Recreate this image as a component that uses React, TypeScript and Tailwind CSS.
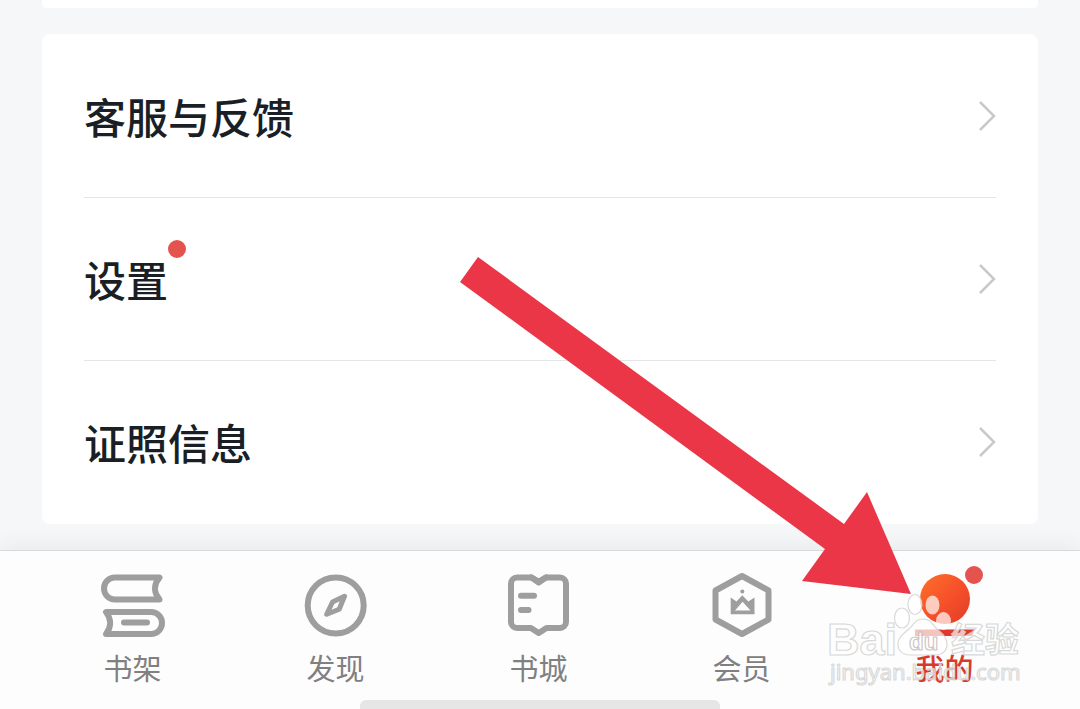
import type { FC, ReactNode } from "react";

interface SettingRowProps {
  label: string;
  hasBadge?: boolean;
}

interface TabItemProps {
  label: string;
  icon: ReactNode;
  active?: boolean;
}

const ShelfIcon: FC = () => (
  <svg viewBox="0 0 72 72" className="size-[72px]" fill="none" stroke="currentColor" strokeWidth="6" strokeLinejoin="round" strokeLinecap="round" aria-hidden="true">
    <path d="M62.500 7.500H18a11 11 0 0 0 0 22h44.500c-6-7-6-15 0-22z" />
    <path d="M9 42h45a11 11 0 0 1 0 22H9c5.500-7 5.500-15 0-22z" />
    <path d="M27 52.500h23" />
  </svg>
);

const CompassIcon: FC = () => (
  <svg viewBox="0 0 72 72" className="size-[72px]" fill="none" stroke="currentColor" strokeLinejoin="round" aria-hidden="true">
    <circle cx="35.700" cy="35.500" r="28" strokeWidth="6" />
    <path d="M44.500 26.200 32.500 32 26.700 44.200 39.200 39.200z" strokeWidth="5" />
  </svg>
);

const StoreIcon: FC = () => (
  <svg viewBox="0 0 72 72" className="size-[72px]" fill="none" stroke="currentColor" strokeWidth="6" strokeLinejoin="round" strokeLinecap="round" aria-hidden="true">
    <path d="M14 7.500h14.500l7.200 4 7.200-4H57a6 6 0 0 1 6 6V52a6 6 0 0 1-6 6H43.500l-7.800 5-7.800-5H14a6 6 0 0 1-6-6V13.500a6 6 0 0 1 6-6z" />
    <path d="M28.500 7.500l7.200 5 7.200-5M18 25.700h13M18 40h7.500" />
  </svg>
);

const VipIcon: FC = () => (
  <svg viewBox="0 0 72 72" className="size-[72px]" fill="none" stroke="currentColor" strokeLinejoin="round" aria-hidden="true">
    <path d="M36 6l26.500 14.500v29L36 64 9.500 49.500v-29z" strokeWidth="6" />
    <path
      d="M24.700 27.500l5.800 4 5.800-6.300 6 6.300 6.200-4v16.700H24.700zM29 40.600h15.500L36.600 31.800z"
      fill="currentColor"
      fillRule="evenodd"
      stroke="none"
    />
    <circle cx="36.300" cy="21.500" r="2" fill="currentColor" stroke="none" />
  </svg>
);

const MineIcon: FC = () => (
  <svg viewBox="0 0 72 72" className="size-[72px]" aria-hidden="true">
    <defs>
      <linearGradient id="mine" x1="0" y1="0" x2="1" y2="1">
        <stop offset="0" stopColor="#ff7028" />
        <stop offset="0.500" stopColor="#f6522a" />
        <stop offset="1" stopColor="#e23b28" />
      </linearGradient>
    </defs>
    <circle cx="36" cy="29" r="25" fill="url(#mine)" />
    <path d="M6 59.500h60l-3 6.500H6z" fill="#e0392b" />
  </svg>
);

const SettingRow: FC<SettingRowProps> = ({ label, hasBadge }) => (
  <li className="border-b border-[#e4e5e7] last:border-b-0">
    <a href="#" className="flex h-[162px] items-center justify-between">
      <span className="relative text-[42px] leading-[60px] font-medium text-[#1a1f26]">
        {label}
        {hasBadge && (
          <span className="absolute -top-[9px] left-full size-[18px] rounded-full bg-[#e5534f]" />
        )}
      </span>
      <svg viewBox="0 0 20 32" className="h-8 w-5" fill="none" stroke="#c9c9c9" strokeWidth="2.500" aria-hidden="true">
        <path d="M4 2l14 14L4 30" />
      </svg>
    </a>
  </li>
);

const TabItem: FC<TabItemProps> = ({ label, icon, active }) => (
  <button
    type="button"
    className={`relative flex flex-1 flex-col items-center gap-[7px] ${active ? "text-[#d9392c]" : "text-[#9e9e9e]"}`}
  >
    {icon}
    <span
      className={`text-[29px] leading-9 ${active ? "font-medium" : "font-normal text-[#808080]"}`}
    >
      {label}
    </span>
    {active && (
      <span className="absolute -top-1 left-1/2 ml-5 size-[18px] rounded-full bg-[#e5534f]" />
    )}
  </button>
);

const PointerArrow: FC = () => (
  <svg viewBox="0 0 451 337" className="pointer-events-none absolute right-[169px] bottom-[115px] h-[337px] w-[451px]" aria-hidden="true">
    <path d="M18 0 384 267 407 235 451 337 342 324 365 292 0 25z" fill="#ea3647" />
  </svg>
);

const Watermark: FC = () => (
  <svg
    viewBox="0 0 204 98"
    className="pointer-events-none absolute right-[52px] bottom-[19px] h-[98px] w-[204px]"
    fill="#fff"
    fillOpacity="0.700"
    stroke="#cfcfcf"
    strokeWidth="1.200"
    strokeOpacity="0.800"
    aria-hidden="true"
  >
    <text x="3" y="63" fontSize="45" fontWeight="700" fontFamily="Liberation Sans, sans-serif">
      Bai
    </text>
    <ellipse cx="78" cy="26" rx="7.500" ry="10" />
    <ellipse cx="91" cy="12.500" rx="7" ry="10" />
    <ellipse cx="108.500" cy="13" rx="7" ry="9.500" strokeOpacity="0" />
    <ellipse cx="119.500" cy="29" rx="7.500" ry="9" strokeOpacity="0" />
    <path d="M99 27c7 0 9 5 13 9 5 5 11 8 11 16 0 7-5 11-12 11H87c-8 0-13-4-13-11 0-8 7-11 12-16 4-4 6-9 13-9z" />
    <text x="85" y="58" fontSize="24" fontWeight="700" fontFamily="Liberation Sans, sans-serif" stroke="#c4b4b4">
      du
    </text>
    <text x="127" y="60" fontSize="34" fontWeight="700" fontFamily="Noto Sans CJK SC, sans-serif">
      经验
    </text>
    <text x="6" y="88" fontSize="22" fontFamily="Noto Sans, sans-serif">
      jingyan.baidu.com
    </text>
  </svg>
);

export default function App() {
  return (
    <div className="relative flex min-h-screen flex-col overflow-hidden bg-[#f6f7f9] font-['Noto_Sans_CJK_SC',sans-serif]">
      <main className="flex flex-1 flex-col gap-[26px] px-[42px] pb-[26px]">
        <div className="h-2 rounded-b-sm bg-white" />
        <ul className="rounded-lg bg-white px-[42px] py-px">
          <SettingRow label="客服与反馈" />
          <SettingRow label="设置" hasBadge />
          <SettingRow label="证照信息" />
        </ul>
      </main>
      <nav className="border-t border-[#d9d9d9] bg-[#fdfdfd] shadow-[0_-6px_20px_rgba(0,0,0,0.05)]">
        <div className="flex pt-[19px] pr-[34px] pb-[15px] pl-[31px]">
          <TabItem label="书架" icon={<ShelfIcon />} />
          <TabItem label="发现" icon={<CompassIcon />} />
          <TabItem label="书城" icon={<StoreIcon />} />
          <TabItem label="会员" icon={<VipIcon />} />
          <TabItem label="我的" icon={<MineIcon />} active />
        </div>
        <div className="mx-auto h-[9px] w-1/3 rounded-t-md bg-[#e6e6e6]" />
      </nav>
      <PointerArrow />
      <Watermark />
    </div>
  );
}
